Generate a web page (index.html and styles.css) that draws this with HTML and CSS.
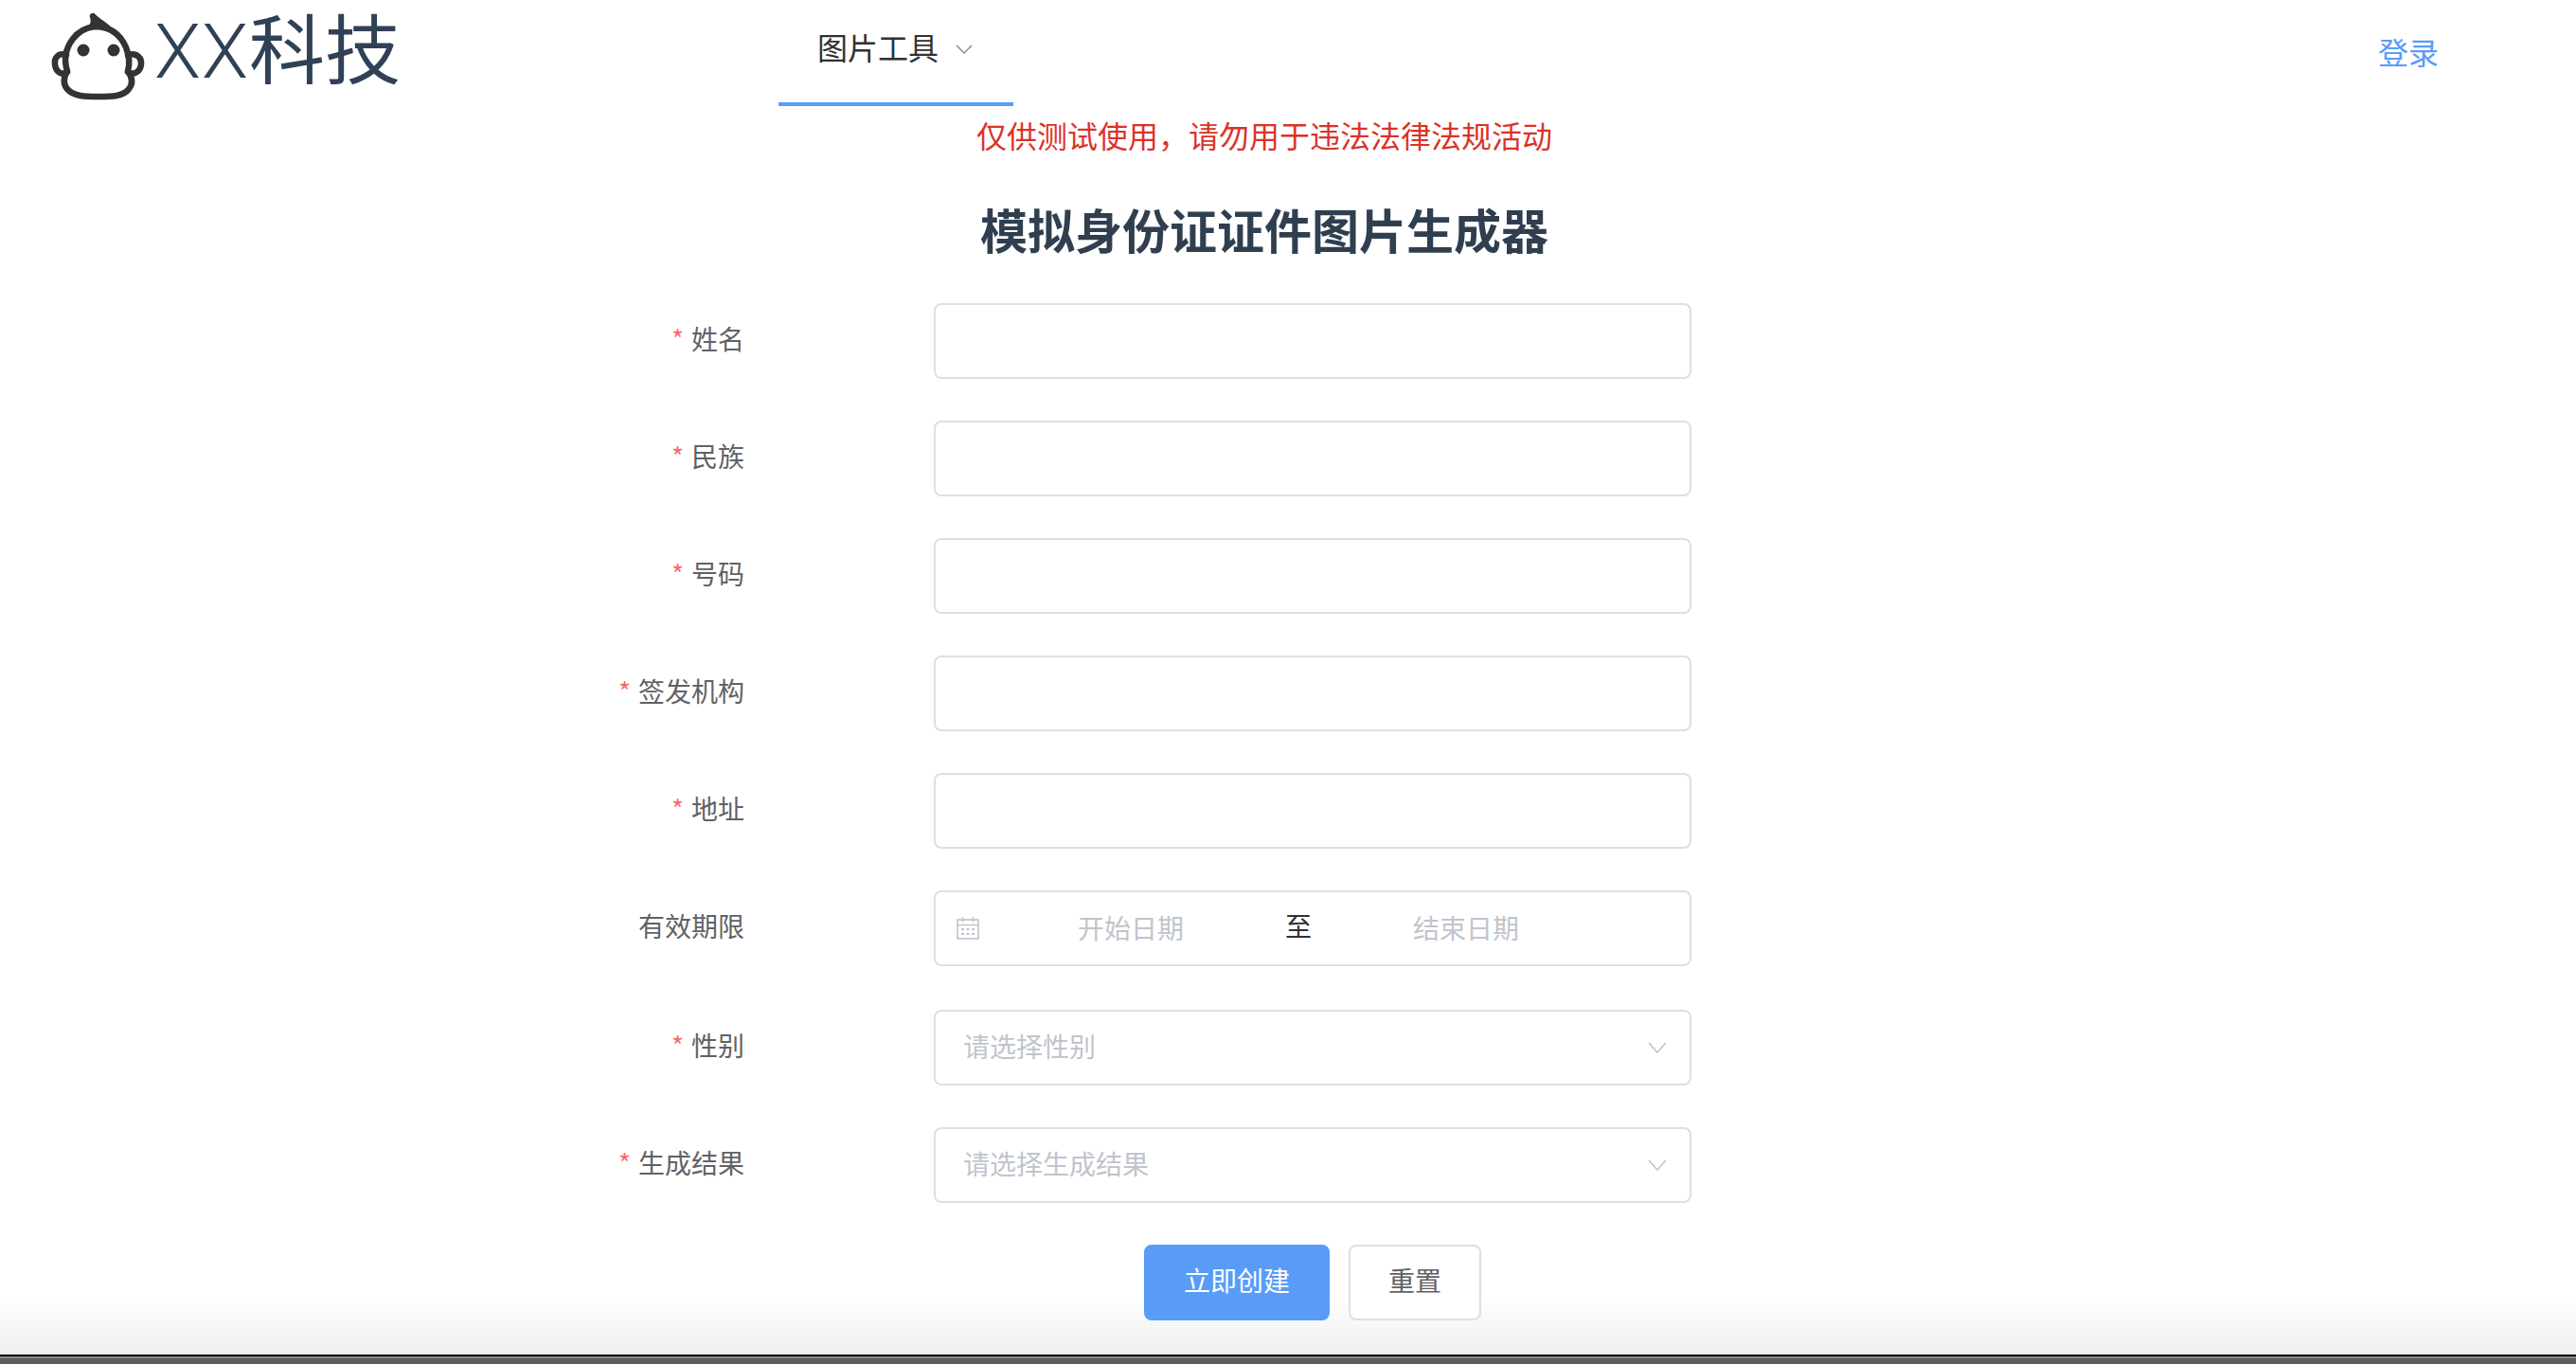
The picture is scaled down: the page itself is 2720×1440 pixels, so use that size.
FILE: index.html
```html
<!DOCTYPE html>
<html lang="zh-CN">
<head>
<meta charset="utf-8">
<title>模拟身份证证件图片生成器</title>
<link rel="stylesheet" href="styles.css">
</head>
<body>
<header class="header">
  <a class="brand">
    <svg class="brand-logo" viewBox="50 10 106 100" width="106" height="100" fill="none" stroke="#333" stroke-width="6.5" stroke-linecap="round" stroke-linejoin="round">
      <path d="M71 75C67 62 70 50 77 41C83 33 92 29 100 28C114 28 126 34 133 50C137 60 137 68 135 75C140 82 141 88 136 94C130 102 118 102 104 102C90 102 78 102 71 94C66 88 67 82 71 75Z"/>
      <path d="M97 28C100 24 99 20 98 17C103 22 108 25 113 29"/>
      <path d="M70 58C61 55 57 62 58 68C59 76 65 80 71 76"/>
      <path d="M135 58C145 55 150 62 149 68C148 76 141 80 135 76"/>
      <circle cx="88" cy="53" r="6.5" fill="#333" stroke="none"/>
      <circle cx="120" cy="53" r="6.5" fill="#333" stroke="none"/>
    </svg>
    <span class="brand-name"><span class="brand-latin">XX</span>科技</span>
  </a>
  <nav class="nav">
    <div class="nav-item">
      <span>图片工具</span>
      <svg class="nav-caret" viewBox="0 0 18 10" width="18" height="10" fill="none" stroke="#909399" stroke-width="1.6"><path d="M1 1L9 9L17 1"/></svg>
    </div>
  </nav>
  <a class="login">登录</a>
</header>
<main class="main">
  <p class="notice">仅供测试使用，请勿用于违法法律法规活动</p>
  <h1 class="title">模拟身份证证件图片生成器</h1>
  <form class="form">
    <div class="row"><label class="label"><i class="req">*</i>姓名</label><input class="control" type="text"></div>
    <div class="row"><label class="label"><i class="req">*</i>民族</label><input class="control" type="text"></div>
    <div class="row"><label class="label"><i class="req">*</i>号码</label><input class="control" type="text"></div>
    <div class="row"><label class="label"><i class="req">*</i>签发机构</label><input class="control" type="text"></div>
    <div class="row"><label class="label"><i class="req">*</i>地址</label><input class="control" type="text"></div>
    <div class="row row-date">
      <label class="label">有效期限</label>
      <div class="control date">
        <svg class="date-icon" viewBox="0 0 24 24" width="24" height="24" fill="none" stroke="#c0c4cc" stroke-width="1.6">
          <rect x="1" y="3" width="22" height="20"/>
          <path d="M1 8.500H23M6.500 0V5M17.500 0V5"/>
          <path d="M5 13H8M10.500 13H13.500M16 13H19M5 18H8M10.500 18H13.500M16 18H19" stroke-width="1.800"/>
        </svg>
        <span class="date-part">开始日期</span>
        <span class="date-sep">至</span>
        <span class="date-part">结束日期</span>
      </div>
    </div>
    <div class="row">
      <label class="label"><i class="req">*</i>性别</label>
      <div class="control select"><span class="select-text">请选择性别</span><svg viewBox="0 0 20 12" width="20" height="12" fill="none" stroke="#c0c4cc" stroke-width="1.600"><path d="M1 1L10 11L19 1"/></svg></div>
    </div>
    <div class="row">
      <label class="label"><i class="req">*</i>生成结果</label>
      <div class="control select"><span class="select-text">请选择生成结果</span><svg viewBox="0 0 20 12" width="20" height="12" fill="none" stroke="#c0c4cc" stroke-width="1.600"><path d="M1 1L10 11L19 1"/></svg></div>
    </div>
    <div class="actions">
      <button class="btn btn-primary" type="button">立即创建</button>
      <button class="btn" type="button">重置</button>
    </div>
  </form>
</main>
<footer class="dock"></footer>
</body>
</html>
```
FILE: styles.css
```css
* { box-sizing: border-box; }
html, body { margin: 0; height: 1440px; }
body {
  display: flex;
  flex-direction: column;
  overflow: hidden;
  background: #fff;
  font-family: "Noto Sans CJK SC", "Noto Sans", sans-serif;
  font-size: 28px;
  color: #606266;
}
.header { display: flex; height: 112px; flex: none; }
.brand { display: flex; align-items: flex-start; padding: 10px 0 0 50px; width: 822px; }
.brand-logo { flex: none; }
.brand-name {
  margin: -11px 0 0 7px;
  font-family: Roboto, "Noto Sans CJK SC", sans-serif;
  font-size: 80px;
  line-height: 112px;
  font-weight: 400;
  color: #304156;
}
.brand-latin { font-weight: 300; letter-spacing: 1px; }
.nav-item {
  display: flex;
  align-items: flex-start;
  width: 248px;
  height: 112px;
  padding: 28px 0 0 41px;
  border-bottom: 4px solid #589cf8;
  font-size: 32px;
  line-height: 42px;
  color: #303133;
}
.nav-caret { margin: 19px 0 0 18px; }
.login {
  margin: 33px 145px 0 auto;
  font-size: 32px;
  line-height: 42px;
  color: #589cf8;
}
.main {
  flex: 1;
  padding-right: 50px;
  background: linear-gradient(#fff, #eee) bottom / 100% 60px no-repeat;
}
.notice {
  margin: 9px 0 0;
  text-align: center;
  font-size: 32px;
  line-height: 42px;
  color: #dc3227;
}
.title {
  margin: 45px 0 0;
  text-align: center;
  font-size: 50px;
  line-height: 66px;
  font-weight: 700;
  color: #303f50;
}
.form {
  display: flex;
  flex-direction: column;
  gap: 44px;
  margin-top: 46px;
  padding-left: 386px;
}
.row { display: flex; align-items: center; gap: 200px; height: 80px; }
.row-date { margin-bottom: 2px; }
.label { width: 400px; text-align: right; line-height: 40px; position: relative; top: -3px; }
.req { margin-right: 8px; font-style: normal; color: #f56c6c; }
.control {
  width: 800px;
  height: 80px;
  border: 2px solid #dcdfe6;
  border-radius: 8px;
  background: #fff;
  font: inherit;
  color: #c0c4cc;
}
.date { display: flex; align-items: center; padding-left: 22px; }
.date-icon { flex: none; }
.date-part { width: 300px; margin-bottom: 3px; text-align: center; }
.date-icon + .date-part { margin-left: 10px; }
.date-sep { width: 54px; text-align: center; color: #303133; position: relative; top: -3px; }
.select { display: flex; align-items: center; justify-content: space-between; padding: 0 24px 0 29px; }
.select-text { margin-bottom: 5px; }
.actions { display: flex; gap: 20px; padding-left: 822px; }
.btn {
  width: 140px;
  height: 80px;
  padding-bottom: 8px;
  border: 2px solid #dcdfe6;
  border-radius: 8px;
  background: #fff;
  font: inherit;
  color: #606266;
}
.btn-primary { width: 196px; border-color: #589cf8; background: #589cf8; color: #fff; }
.dock {
  flex: none;
  height: 10px;
  border-top: 2px solid #050505;
  background: linear-gradient(#8a8a8a 2px, #5c5e5e 2px);
}
```
